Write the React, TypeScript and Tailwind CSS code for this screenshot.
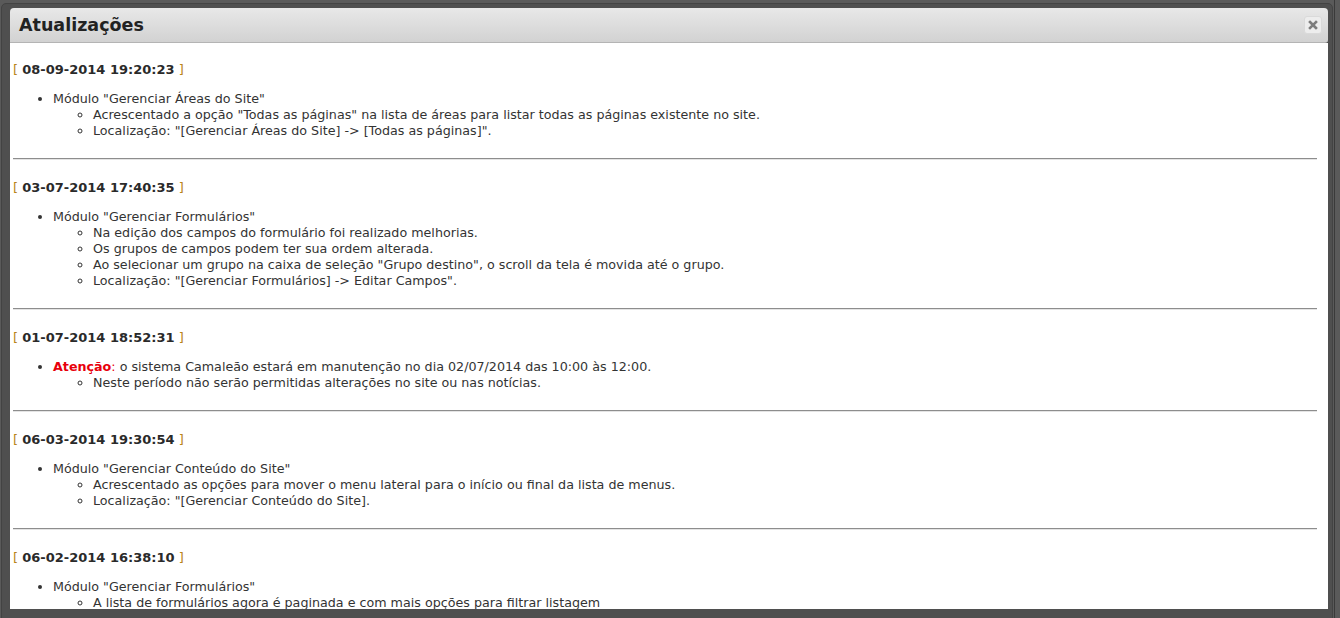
import React from "react";

type Entry = {
  date: string;
  items: { main: React.ReactNode; subs: string[] }[];
};

const entries: Entry[] = [
  {
    date: "08-09-2014 19:20:23",
    items: [
      {
        main: 'Módulo "Gerenciar Áreas do Site"',
        subs: [
          'Acrescentado a opção "Todas as páginas" na lista de áreas para listar todas as páginas existente no site.',
          'Localização: "[Gerenciar Áreas do Site] -> [Todas as páginas]".',
        ],
      },
    ],
  },
  {
    date: "03-07-2014 17:40:35",
    items: [
      {
        main: 'Módulo "Gerenciar Formulários"',
        subs: [
          "Na edição dos campos do formulário foi realizado melhorias.",
          "Os grupos de campos podem ter sua ordem alterada.",
          'Ao selecionar um grupo na caixa de seleção "Grupo destino", o scroll da tela é movida até o grupo.',
          'Localização: "[Gerenciar Formulários] -> Editar Campos".',
        ],
      },
    ],
  },
  {
    date: "01-07-2014 18:52:31",
    items: [
      {
        main: (
          <>
            <span className="font-bold text-[#e8000b]">Atenção</span>
            <span className="text-[#e8000b]">:</span> o sistema Camaleão estará em manutenção no dia 02/07/2014 das
            10:00 às 12:00.
          </>
        ),
        subs: ["Neste período não serão permitidas alterações no site ou nas notícias."],
      },
    ],
  },
  {
    date: "06-03-2014 19:30:54",
    items: [
      {
        main: 'Módulo "Gerenciar Conteúdo do Site"',
        subs: [
          "Acrescentado as opções para mover o menu lateral para o início ou final da lista de menus.",
          'Localização: "[Gerenciar Conteúdo do Site].',
        ],
      },
    ],
  },
  {
    date: "06-02-2014 16:38:10",
    items: [
      {
        main: 'Módulo "Gerenciar Formulários"',
        subs: [
          "A lista de formulários agora é paginada e com mais opções para filtrar listagem",
          'Localização: "[Gerenciar Formulários]".',
        ],
      },
    ],
  },
];

const EntryBlock = ({ entry, last }: { entry: Entry; last: boolean }) => (
  <div>
    <div className="h-[16px] leading-[16px] text-[13px]">
      <span className="text-[#b98418]">[ </span>
      <span className="font-bold text-[#2a2a2a]">{entry.date}</span>
      <span className="text-[#b98418]"> ]</span>
    </div>
    <ul className="list-disc pl-10 mt-[13px] text-[12.7px] leading-[16px] text-[#333]">
      {entry.items.map((item, i) => (
        <li key={i}>
          {item.main}
          <ul className="list-[circle] pl-10">
            {item.subs.map((s) => (
              <li key={s}>{s}</li>
            ))}
          </ul>
        </li>
      ))}
    </ul>
    {!last && <hr className="mt-[19px] mb-[20px] border-0 border-t border-b border-t-[#8d8d8d] border-b-[#e4e4e4]" />}
  </div>
);

export default function App() {
  return (
    <div
      className="w-[1340px] h-[618px] overflow-hidden bg-[#5a5a5a] flex"
      style={{ fontFamily: '"DejaVu Sans", Verdana, sans-serif' }}
    >
      <div className="ml-[1px] mt-[3px] w-[1332px] h-[660px] shrink-0 rounded-[5px] border border-[#434343] bg-[#4f4f4f] pl-[8px] pr-[4px] pt-[4px]">
        <div className="h-[35px] rounded-t-[4px] rounded-br-[3px] border-b border-[#b4b4b4] bg-gradient-to-b from-[#e8e8e8] to-[#d2d2d2] flex items-center justify-between pl-[9px] pr-[6px]">
          <h1 className="text-[17.5px] font-bold text-[#222]">Atualizações</h1>
          <button className="w-[18px] h-[18px] rounded-[3px] border border-[#dadada] bg-[#ededed] flex items-center justify-center">
            <svg width="10" height="10" viewBox="0 0 10 10">
              <path d="M2 2 L8 8 M8 2 L2 8" stroke="#7d7d7d" strokeWidth="2.6" strokeLinecap="square" />
            </svg>
          </button>
        </div>
        <div className="h-[566px] bg-white overflow-hidden pl-[3px] pr-[11px] pt-[19px]">
          {entries.map((e, i) => (
            <EntryBlock key={e.date} entry={e} last={i === entries.length - 1} />
          ))}
        </div>
      </div>
      <div className="ml-[1px] w-px h-full bg-[#3a3a3a] shrink-0" />
    </div>
  );
}
